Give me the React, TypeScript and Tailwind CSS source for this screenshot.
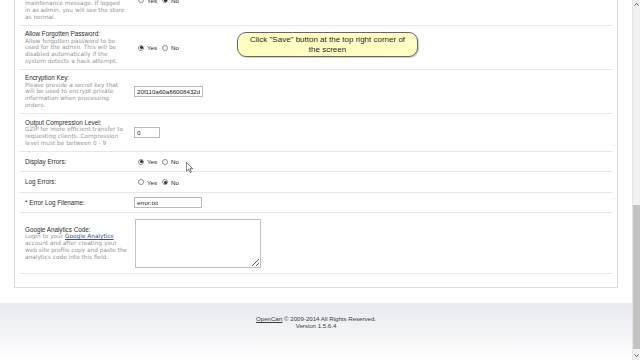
import clsx from 'clsx';

const LABEL = "font-['Liberation_Sans',Arial,sans-serif] text-[6.3px] leading-[7.5px] text-[#2b2b2b]";
const HELP = "font-['DejaVu_Sans',Verdana,sans-serif] text-[5.8px] leading-[6.8px] text-[#979797]";
const FIELD = "font-['Liberation_Sans',Arial,sans-serif] text-[6.2px] text-[#1c1c1c]";

function Radio({ checked }: { checked: boolean }) {
    return (
        <span className="flex size-[6px] items-center justify-center rounded-full border border-[#8e8e8e] bg-white">
            {checked && <span className="size-[3px] rounded-full bg-[#2e2e2e]" />}
        </span>
    );
}

function YesNo({ yes }: { yes: boolean }) {
    return (
        <div className={clsx(FIELD, 'ml-[4px] flex items-center leading-[7px]')}>
            <Radio checked={yes} />
            <span className="ml-[3px]">Yes</span>
            <span className="ml-[5px]">
                <Radio checked={!yes} />
            </span>
            <span className="ml-[3px]">No</span>
        </div>
    );
}

function TextInput({ value, className }: { value: string; className: string }) {
    return (
        <input
            readOnly
            value={value}
            className={clsx(FIELD, 'h-[11px] border border-[#b8b8b8] bg-white px-[2px] leading-[9px] outline-none', className)}
        />
    );
}

type Row = {
    label: string;
    help?: React.ReactNode[];
    height: string;
    field: React.ReactNode;
};

const ROWS: Row[] = [
    {
        label: 'Maintenance Mode:',
        help: [
            'Prevents customers from browsing',
            'your store. They will instead see a',
            'maintenance message. If logged',
            'in as admin, you will see the store',
            'as normal.',
        ],
        height: 'h-[51px]',
        field: <YesNo yes={false} />,
    },
    {
        label: 'Allow Forgotten Password:',
        help: [
            'Allow forgotten password to be',
            'used for the admin. This will be',
            'disabled automatically if the',
            'system detects a hack attempt.',
        ],
        height: 'h-[44px]',
        field: <YesNo yes={true} />,
    },
    {
        label: 'Encryption Key:',
        help: ['Please provide a secret key that', 'will be used to encrypt private', 'information when processing', 'orders.'],
        height: 'h-[44px]',
        field: <TextInput value="20f110a60a86008432d" className="w-[69px]" />,
    },
    {
        label: 'Output Compression Level:',
        help: ['GZIP for more efficient transfer to', 'requesting clients. Compression', 'level must be between 0 - 9'],
        height: 'h-[38px]',
        field: <TextInput value="0" className="w-[26px]" />,
    },
    { label: 'Display Errors:', height: 'h-[20px]', field: <YesNo yes={true} /> },
    { label: 'Log Errors:', height: 'h-[21px]', field: <YesNo yes={false} /> },
    {
        label: '* Error Log Filename:',
        height: 'h-[20px]',
        field: <TextInput value="error.txt" className="w-[68px]" />,
    },
    {
        label: 'Google Analytics Code:',
        help: [
            <>
                Login to your <span className="text-[#34508f] underline">Google Analytics</span>
            </>,
            'account and after creating your',
            'web site profile copy and paste the',
            'analytics code into this field.',
        ],
        height: 'h-[61px]',
        field: <textarea readOnly className="ml-[1px] h-[49px] w-[126px] border border-[#c2c2c2] bg-white outline-none" />,
    },
];

function Chevron({ up }: { up: boolean }) {
    return (
        <svg width="5" height="3" viewBox="0 0 5 3" className="text-[#505050]">
            <polyline
                points={up ? '0.5,2.5 2.5,0.5 4.5,2.5' : '0.5,0.5 2.5,2.5 4.5,0.5'}
                fill="none"
                stroke="currentColor"
                strokeWidth="1"
            />
        </svg>
    );
}

export default function App() {
    return (
        <div className="relative flex h-[360px] w-[640px] overflow-hidden bg-white">
            <div className="flex flex-1 flex-col">
                <div className="px-[14px]">
                    {/* page is scrolled: top of the settings panel is above the viewport */}
                    <div className="-mt-[31px] border border-[#dcdcdc] p-[5px] pb-[13px]">
                        {ROWS.map((row) => (
                            <div key={row.label} className={clsx('flex items-center border-b border-[#e6e6e6]', row.height)}>
                                <div className="w-[109px] shrink-0 whitespace-nowrap pl-[5px]">
                                    <div className={LABEL}>{row.label}</div>
                                    {row.help?.map((line, i) => (
                                        <div key={i} className={HELP}>
                                            {line}
                                        </div>
                                    ))}
                                </div>
                                <div className="flex items-center pl-[5px]">{row.field}</div>
                            </div>
                        ))}
                    </div>
                </div>

                <footer className="mt-[15px] flex-1 bg-gradient-to-b from-[#e7e9ee] to-white pt-[12px] text-center font-['Liberation_Sans',Arial,sans-serif] text-[6.1px] leading-[7px] text-[#3a3a3a]">
                    <div>
                        <span className="underline">OpenCart</span> © 2009-2014 All Rights Reserved.
                    </div>
                    <div>Version 1.5.6.4</div>
                </footer>
            </div>

            {/* scrollbar */}
            <div className="flex w-[8px] flex-col items-center border-l border-[#e6e6e6] bg-[#f1f1f1]">
                <div className="flex h-[9px] items-center justify-center">
                    <Chevron up />
                </div>
                <div className="h-[196px]" />
                <div className="h-[144px] w-full bg-[#c3c3c3]" />
                <div className="flex-1" />
                <div className="flex h-[9px] items-center justify-center">
                    <Chevron up={false} />
                </div>
            </div>

            {/* tutorial callout */}
            <div className="absolute left-[237px] top-[32px] flex h-[25px] w-[181px] flex-col items-center justify-center rounded-[9px] border border-[#666] bg-[#ffffc2] font-['Liberation_Sans',Arial,sans-serif] text-[8px] leading-[10px] text-[#1e1e1e] shadow-[1px_1px_1px_rgba(0,0,0,0.2)]">
                <div>Click "Save" button at the top right corner of</div>
                <div>the screen</div>
            </div>

            {/* mouse pointer */}
            <svg width="7" height="11" viewBox="0 0 12 19" className="absolute left-[186px] top-[162px]">
                <path d="M0.5 0.5 L0.5 16 L4.3 12.4 L7 18.2 L9.2 17.2 L6.6 11.6 L11.5 11.6 Z" fill="#fff" stroke="#333" strokeWidth="1.2" />
            </svg>
        </div>
    );
}
